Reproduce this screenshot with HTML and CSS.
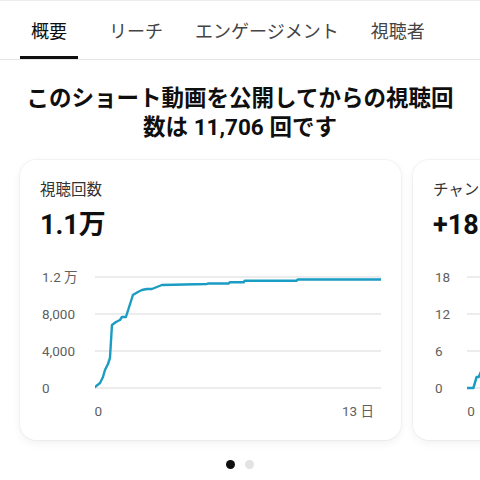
FILE: index.html
```html
<!DOCTYPE html>
<html>
<head>
    <title>アナリティクス</title>
    <link rel="stylesheet" href="styles.css">
</head>
<body>
    <nav class="tabs">
        <div class="tab active">概要</div>
        <div class="tab">リーチ</div>
        <div class="tab">エンゲージメント</div>
        <div class="tab">視聴者</div>
    </nav>

    <h1 class="headline">このショート動画を公開してからの視聴回数は 11,706 回です</h1>

    <div class="cards">
        <div class="card">
            <div class="card-title">視聴回数</div>
            <div class="card-value">1.1万</div>
            <div class="chart">
                <div class="y-labels">
                    <span>1.2 万</span>
                    <span>8,000</span>
                    <span>4,000</span>
                    <span>0</span>
                </div>
                <div class="plot">
                    <svg viewBox="0 0 287 127" preserveAspectRatio="none">
                        <line class="grid" x1="0" y1="8" x2="287" y2="8"/>
                        <line class="grid" x1="0" y1="45" x2="287" y2="45"/>
                        <line class="grid" x1="0" y1="82" x2="287" y2="82"/>
                        <line class="grid" x1="0" y1="119" x2="287" y2="119"/>
                        <polyline class="series" points="0,118 5,114 8,108 10,101 13,95 15,89 17,56 21,53 25,51 27,48 31,48 38,26 43,23 47,21 52,20 57,20 62,18 67,16 112,15 113,14.5 134,14.5 135,13.3 149,13.3 150,11.7 202,11.7 203,10.5 287,10.5"/>
                    </svg>
                    <div class="x-labels">
                        <span>0</span>
                        <span class="x-end">13 日</span>
                    </div>
                </div>
            </div>
        </div>

        <div class="card">
            <div class="card-title">チャンネル登録者</div>
            <div class="card-value">+18</div>
            <div class="chart">
                <div class="y-labels">
                    <span>18</span>
                    <span>12</span>
                    <span>6</span>
                    <span>0</span>
                </div>
                <div class="plot">
                    <svg viewBox="0 0 287 127" preserveAspectRatio="none">
                        <line class="grid" x1="0" y1="8" x2="287" y2="8"/>
                        <line class="grid" x1="0" y1="45" x2="287" y2="45"/>
                        <line class="grid" x1="0" y1="82" x2="287" y2="82"/>
                        <line class="grid" x1="0" y1="119" x2="287" y2="119"/>
                        <polyline class="series" points="0,119 6,119 9,108 11,108 13,103 14,103 16,92 19,92 22,80 26,80 30,66 36,60 44,50 60,40 90,30 140,24 287,20"/>
                    </svg>
                    <div class="x-labels">
                        <span>0</span>
                        <span class="x-end">13 日</span>
                    </div>
                </div>
            </div>
        </div>
    </div>

    <div class="dots">
        <span class="dot current"></span>
        <span class="dot"></span>
    </div>
</body>
</html>
```

FILE: styles.css
```css
body {
    margin: 0;
    width: 480px;
    height: 480px;
    overflow: hidden;
    background: #fff;
    color: #0f0f0f;
    font-family: Roboto, "Noto Sans CJK JP", sans-serif;
    border-top: 1px solid #ececec;
    box-sizing: border-box;
}

/* tab bar */
.tabs {
    display: flex;
    height: 58px;
    padding-left: 20px;
    border-bottom: 1px solid #e5e5e5;
}
.tab {
    display: flex;
    align-items: center;
    padding: 3px 11px 0;
    margin-right: 10px;
    font-size: 18px;
    color: #444;
    box-sizing: border-box;
    border-bottom: 3px solid transparent;
}
.tab.active {
    color: #0f0f0f;
    border-bottom-color: #0f0f0f;
    margin-right: 20px;
}

.headline {
    margin: 24px 0 18px;
    padding: 0 22px;
    text-align: center;
    font-size: 22.5px;
    line-height: 29px;
    font-weight: bold;
}

/* cards carousel */
.cards {
    display: flex;
    gap: 12px;
    padding-left: 20px;
}
.card {
    flex-shrink: 0;
    width: 381px;
    padding: 20px 20px 21px;
    box-sizing: border-box;
    border-radius: 16px;
    background: #fff;
    box-shadow: 0 0 0 1px rgba(0, 0, 0, 0.035), 0 3px 10px rgba(0, 0, 0, 0.06);
}
.card-title {
    font-size: 15.5px;
    line-height: 20px;
    color: #333;
}
.card-value {
    margin-top: 8px;
    font-size: 27px;
    line-height: 34px;
    font-weight: bold;
}

.chart {
    display: flex;
    margin-top: 27px;
}
.y-labels {
    display: flex;
    flex-direction: column;
    gap: 21px;
    padding-left: 2px;
    padding-right: 17px;
    font-size: 13.5px;
    line-height: 16px;
    color: #606060;
}
.plot {
    flex: 1;
}
.plot svg {
    display: block;
    width: 100%;
    height: 127px;
}
.grid {
    stroke: #e6e6e6;
    stroke-width: 1.5;
}
.series {
    fill: none;
    stroke: #1a9cc3;
    stroke-width: 2.4;
    stroke-linejoin: round;
    stroke-linecap: round;
}
.x-labels {
    display: flex;
    justify-content: space-between;
    margin-top: 7px;
    font-size: 13.5px;
    line-height: 16px;
    color: #606060;
}
.x-end {
    margin-right: 7px;
}

/* pager */
.dots {
    display: flex;
    justify-content: center;
    gap: 10px;
    margin-top: 20px;
}
.dot {
    width: 9px;
    height: 9px;
    border-radius: 50%;
    background: #e3e3e3;
}
.dot.current {
    background: #0f0f0f;
}
```
